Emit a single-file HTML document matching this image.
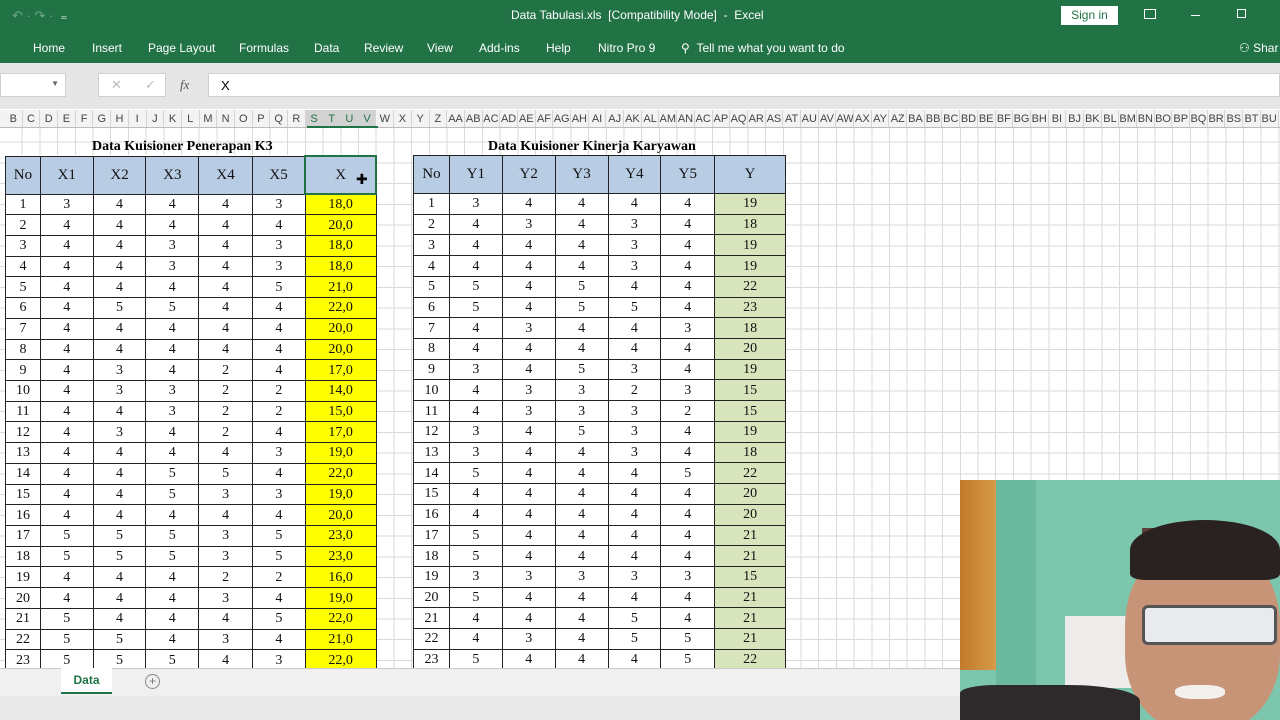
<!DOCTYPE html><html><head><meta charset="utf-8"><style>
*{margin:0;padding:0;box-sizing:border-box}
body{width:1280px;height:720px;overflow:hidden;position:relative;background:#fff;font-family:"Liberation Sans",sans-serif}
.abs{position:absolute}
#top{left:0;top:0;width:1280px;height:63px;background:#217346;color:#fff}
.tab{position:absolute;top:41px;font-size:12px;color:#fff}
#fb{left:0;top:63px;width:1280px;height:46px;background:#e6e6e6}
#colh{left:0;top:110px;width:1280px;height:18px;background:#f3f3f3;border-bottom:1px solid #bcbcbc;display:flex;font-size:11px;color:#444}
#colh span{width:17.7px;flex:none;text-align:center;line-height:18px;border-right:1px solid #d4d4d4;overflow:hidden;white-space:nowrap}
#grid{left:0;top:128px;width:1280px;height:540px;background-color:#fff;
background-image:repeating-linear-gradient(90deg,transparent 0 16.7px,#dadada 16.7px 17.7px),repeating-linear-gradient(180deg,transparent 0 19.73px,#dadada 19.73px 20.73px);background-position:5px 0,0 -6px}
table{position:absolute;border-collapse:collapse;font-family:"Liberation Serif",serif;font-size:14px;color:#111;background:#fff}
td{border:1px solid #222;text-align:center;height:20.73px;padding:0;line-height:19px}
tr.h td{height:38px;background:#b8cce4;font-size:15px}
.yl{background:#ffff00}.gr{background:#d8e4bc}
.ttl{position:absolute;top:139px;font-family:"Liberation Serif",serif;font-weight:bold;font-size:14px}
#tabs{left:0;top:668px;width:1280px;height:28px;background:#f0f0f0;border-top:1px solid #ccc}
#status{left:0;top:696px;width:1280px;height:24px;background:#e9e9e9}
</style></head><body>
<div id="top" class="abs">
<div class="abs" style="left:12px;top:8px;font-size:13px;color:#6fa888">↶ · ↷ · &nbsp;<span style="color:#fff">₌</span></div>
<div class="abs" style="left:511px;top:8px;font-size:12px">Data Tabulasi.xls &nbsp;[Compatibility Mode] &nbsp;- &nbsp;Excel</div>
<div class="abs" style="left:1061px;top:6px;width:57px;height:19px;background:#fff;color:#217346;font-size:12px;text-align:center;line-height:19px">Sign in</div>
<div class="abs" style="left:1144px;top:9px;width:12px;height:10px;border:1px solid #fff"></div>
<div class="abs" style="left:1191px;top:15px;width:9px;height:1px;background:#fff"></div>
<div class="abs" style="left:1237px;top:9px;width:9px;height:9px;border:1px solid #fff"></div>
<span class="tab" style="left:33px">Home</span><span class="tab" style="left:92px">Insert</span><span class="tab" style="left:148px">Page Layout</span><span class="tab" style="left:239px">Formulas</span><span class="tab" style="left:314px">Data</span><span class="tab" style="left:364px">Review</span><span class="tab" style="left:427px">View</span><span class="tab" style="left:479px">Add-ins</span><span class="tab" style="left:546px">Help</span><span class="tab" style="left:598px">Nitro Pro 9</span>
<span class="tab" style="left:681px">⚲ &nbsp;Tell me what you want to do</span>
<span class="tab" style="left:1239px">⚇ Shar</span>
</div>
<div id="fb" class="abs">
<div class="abs" style="left:0;top:10px;width:66px;height:24px;background:#fff;border:1px solid #d0d0d0"><span style="position:absolute;right:6px;top:5px;font-size:8px;color:#666">▼</span></div>
<div class="abs" style="left:98px;top:10px;width:68px;height:24px;background:#fff;border:1px solid #d0d0d0;font-size:13px;color:#bbb"><span style="position:absolute;left:12px;top:3px">✕</span><span style="position:absolute;left:46px;top:3px">✓</span></div>
<div class="abs" style="left:180px;top:14px;font-family:'Liberation Serif',serif;font-style:italic;font-size:13px;color:#555">fx</div>
<div class="abs" style="left:208px;top:10px;width:1072px;height:24px;background:#fff;border:1px solid #d0d0d0;font-size:13px;padding:4px 0 0 12px">X</div>
</div>
<div id="colh" class="abs"><span style="width:5px;border:0"></span>
<span>B</span><span>C</span><span>D</span><span>E</span><span>F</span><span>G</span><span>H</span><span>I</span><span>J</span><span>K</span><span>L</span><span>M</span><span>N</span><span>O</span><span>P</span><span>Q</span><span>R</span><span style="background:#d2d2d2;color:#217346">S</span><span style="background:#d2d2d2;color:#217346">T</span><span style="background:#d2d2d2;color:#217346">U</span><span style="background:#d2d2d2;color:#217346">V</span><span>W</span><span>X</span><span>Y</span><span>Z</span><span>AA</span><span>AB</span><span>AC</span><span>AD</span><span>AE</span><span>AF</span><span>AG</span><span>AH</span><span>AI</span><span>AJ</span><span>AK</span><span>AL</span><span>AM</span><span>AN</span><span>AC</span><span>AP</span><span>AQ</span><span>AR</span><span>AS</span><span>AT</span><span>AU</span><span>AV</span><span>AW</span><span>AX</span><span>AY</span><span>AZ</span><span>BA</span><span>BB</span><span>BC</span><span>BD</span><span>BE</span><span>BF</span><span>BG</span><span>BH</span><span>BI</span><span>BJ</span><span>BK</span><span>BL</span><span>BM</span><span>BN</span><span>BO</span><span>BP</span><span>BQ</span><span>BR</span><span>BS</span><span>BT</span><span>BU</span></div>
<div class="abs" style="left:307px;top:126px;width:71px;height:2px;background:#217346"></div>
<div id="grid" class="abs"></div>
<div class="ttl" style="left:92px">Data Kuisioner Penerapan K3</div>
<div class="ttl" style="left:488px">Data Kuisioner Kinerja Karyawan</div>
<table style="left:5px;top:155px;width:372px">
<colgroup><col style="width:35px"><col style="width:53px"><col style="width:53px"><col style="width:53px"><col style="width:54px"><col style="width:53px"><col style="width:71px"></colgroup>
<tr class="h"><td>No</td><td>X1</td><td>X2</td><td>X3</td><td>X4</td><td>X5</td><td style="border:2px solid #217346">X</td></tr>
<tr><td>1</td><td>3</td><td>4</td><td>4</td><td>4</td><td>3</td><td class="yl">18,0</td></tr>
<tr><td>2</td><td>4</td><td>4</td><td>4</td><td>4</td><td>4</td><td class="yl">20,0</td></tr>
<tr><td>3</td><td>4</td><td>4</td><td>3</td><td>4</td><td>3</td><td class="yl">18,0</td></tr>
<tr><td>4</td><td>4</td><td>4</td><td>3</td><td>4</td><td>3</td><td class="yl">18,0</td></tr>
<tr><td>5</td><td>4</td><td>4</td><td>4</td><td>4</td><td>5</td><td class="yl">21,0</td></tr>
<tr><td>6</td><td>4</td><td>5</td><td>5</td><td>4</td><td>4</td><td class="yl">22,0</td></tr>
<tr><td>7</td><td>4</td><td>4</td><td>4</td><td>4</td><td>4</td><td class="yl">20,0</td></tr>
<tr><td>8</td><td>4</td><td>4</td><td>4</td><td>4</td><td>4</td><td class="yl">20,0</td></tr>
<tr><td>9</td><td>4</td><td>3</td><td>4</td><td>2</td><td>4</td><td class="yl">17,0</td></tr>
<tr><td>10</td><td>4</td><td>3</td><td>3</td><td>2</td><td>2</td><td class="yl">14,0</td></tr>
<tr><td>11</td><td>4</td><td>4</td><td>3</td><td>2</td><td>2</td><td class="yl">15,0</td></tr>
<tr><td>12</td><td>4</td><td>3</td><td>4</td><td>2</td><td>4</td><td class="yl">17,0</td></tr>
<tr><td>13</td><td>4</td><td>4</td><td>4</td><td>4</td><td>3</td><td class="yl">19,0</td></tr>
<tr><td>14</td><td>4</td><td>4</td><td>5</td><td>5</td><td>4</td><td class="yl">22,0</td></tr>
<tr><td>15</td><td>4</td><td>4</td><td>5</td><td>3</td><td>3</td><td class="yl">19,0</td></tr>
<tr><td>16</td><td>4</td><td>4</td><td>4</td><td>4</td><td>4</td><td class="yl">20,0</td></tr>
<tr><td>17</td><td>5</td><td>5</td><td>5</td><td>3</td><td>5</td><td class="yl">23,0</td></tr>
<tr><td>18</td><td>5</td><td>5</td><td>5</td><td>3</td><td>5</td><td class="yl">23,0</td></tr>
<tr><td>19</td><td>4</td><td>4</td><td>4</td><td>2</td><td>2</td><td class="yl">16,0</td></tr>
<tr><td>20</td><td>4</td><td>4</td><td>4</td><td>3</td><td>4</td><td class="yl">19,0</td></tr>
<tr><td>21</td><td>5</td><td>4</td><td>4</td><td>4</td><td>5</td><td class="yl">22,0</td></tr>
<tr><td>22</td><td>5</td><td>5</td><td>4</td><td>3</td><td>4</td><td class="yl">21,0</td></tr>
<tr><td>23</td><td>5</td><td>5</td><td>5</td><td>4</td><td>3</td><td class="yl">22,0</td></tr>
</table>
<table style="left:413px;top:155px;width:373px">
<colgroup><col style="width:36px"><col style="width:53px"><col style="width:53px"><col style="width:53px"><col style="width:53px"><col style="width:54px"><col style="width:71px"></colgroup>
<tr class="h"><td>No</td><td>Y1</td><td>Y2</td><td>Y3</td><td>Y4</td><td>Y5</td><td>Y</td></tr>
<tr><td>1</td><td>3</td><td>4</td><td>4</td><td>4</td><td>4</td><td class="gr">19</td></tr>
<tr><td>2</td><td>4</td><td>3</td><td>4</td><td>3</td><td>4</td><td class="gr">18</td></tr>
<tr><td>3</td><td>4</td><td>4</td><td>4</td><td>3</td><td>4</td><td class="gr">19</td></tr>
<tr><td>4</td><td>4</td><td>4</td><td>4</td><td>3</td><td>4</td><td class="gr">19</td></tr>
<tr><td>5</td><td>5</td><td>4</td><td>5</td><td>4</td><td>4</td><td class="gr">22</td></tr>
<tr><td>6</td><td>5</td><td>4</td><td>5</td><td>5</td><td>4</td><td class="gr">23</td></tr>
<tr><td>7</td><td>4</td><td>3</td><td>4</td><td>4</td><td>3</td><td class="gr">18</td></tr>
<tr><td>8</td><td>4</td><td>4</td><td>4</td><td>4</td><td>4</td><td class="gr">20</td></tr>
<tr><td>9</td><td>3</td><td>4</td><td>5</td><td>3</td><td>4</td><td class="gr">19</td></tr>
<tr><td>10</td><td>4</td><td>3</td><td>3</td><td>2</td><td>3</td><td class="gr">15</td></tr>
<tr><td>11</td><td>4</td><td>3</td><td>3</td><td>3</td><td>2</td><td class="gr">15</td></tr>
<tr><td>12</td><td>3</td><td>4</td><td>5</td><td>3</td><td>4</td><td class="gr">19</td></tr>
<tr><td>13</td><td>3</td><td>4</td><td>4</td><td>3</td><td>4</td><td class="gr">18</td></tr>
<tr><td>14</td><td>5</td><td>4</td><td>4</td><td>4</td><td>5</td><td class="gr">22</td></tr>
<tr><td>15</td><td>4</td><td>4</td><td>4</td><td>4</td><td>4</td><td class="gr">20</td></tr>
<tr><td>16</td><td>4</td><td>4</td><td>4</td><td>4</td><td>4</td><td class="gr">20</td></tr>
<tr><td>17</td><td>5</td><td>4</td><td>4</td><td>4</td><td>4</td><td class="gr">21</td></tr>
<tr><td>18</td><td>5</td><td>4</td><td>4</td><td>4</td><td>4</td><td class="gr">21</td></tr>
<tr><td>19</td><td>3</td><td>3</td><td>3</td><td>3</td><td>3</td><td class="gr">15</td></tr>
<tr><td>20</td><td>5</td><td>4</td><td>4</td><td>4</td><td>4</td><td class="gr">21</td></tr>
<tr><td>21</td><td>4</td><td>4</td><td>4</td><td>5</td><td>4</td><td class="gr">21</td></tr>
<tr><td>22</td><td>4</td><td>3</td><td>4</td><td>5</td><td>5</td><td class="gr">21</td></tr>
<tr><td>23</td><td>5</td><td>4</td><td>4</td><td>4</td><td>5</td><td class="gr">22</td></tr>
</table>
<div class="abs" style="left:356px;top:171px;font-size:14px;color:#000">✚</div>
<div id="tabs" class="abs">
<div class="abs" style="left:61px;top:-1px;width:51px;height:26px;background:#fff;border-bottom:2px solid #217346;color:#217346;font-weight:bold;font-size:12px;text-align:center;line-height:24px">Data</div>
<div class="abs" style="left:145px;top:5px;width:15px;height:15px;border:1px solid #888;border-radius:50%;font-size:12px;color:#777;text-align:center;line-height:13px">+</div>
</div>
<div id="status" class="abs"></div>
<div class="abs" style="left:960px;top:480px;width:320px;height:240px;overflow:hidden;background:#7cc6ae">
<div class="abs" style="left:0;top:0;width:36px;height:190px;background:linear-gradient(90deg,#c07a2a,#d89a48)"></div>
<div class="abs" style="left:36px;top:0;width:40px;height:240px;background:#6ab89e"></div>
<div class="abs" style="left:105px;top:136px;width:70px;height:72px;background:#eeeceb"></div>
<div class="abs" style="left:182px;top:48px;width:12px;height:22px;background:#5a4038"></div>
<div class="abs" style="left:165px;top:60px;width:155px;height:190px;border-radius:45% 45% 40% 40%;background:#c89478"></div>
<div class="abs" style="left:170px;top:40px;width:150px;height:60px;border-radius:50% 50% 10% 10%;background:#2a2220"></div>
<div class="abs" style="left:182px;top:125px;width:135px;height:40px;background:#e8eaee;border:3px solid #555;border-radius:6px"></div>
<div class="abs" style="left:215px;top:205px;width:50px;height:14px;background:#f4f0ee;border-radius:40%"></div>
<div class="abs" style="left:0;top:205px;width:180px;height:40px;background:#2e2a2c;border-radius:20% 40% 0 0"></div>
</div>
</body></html>
